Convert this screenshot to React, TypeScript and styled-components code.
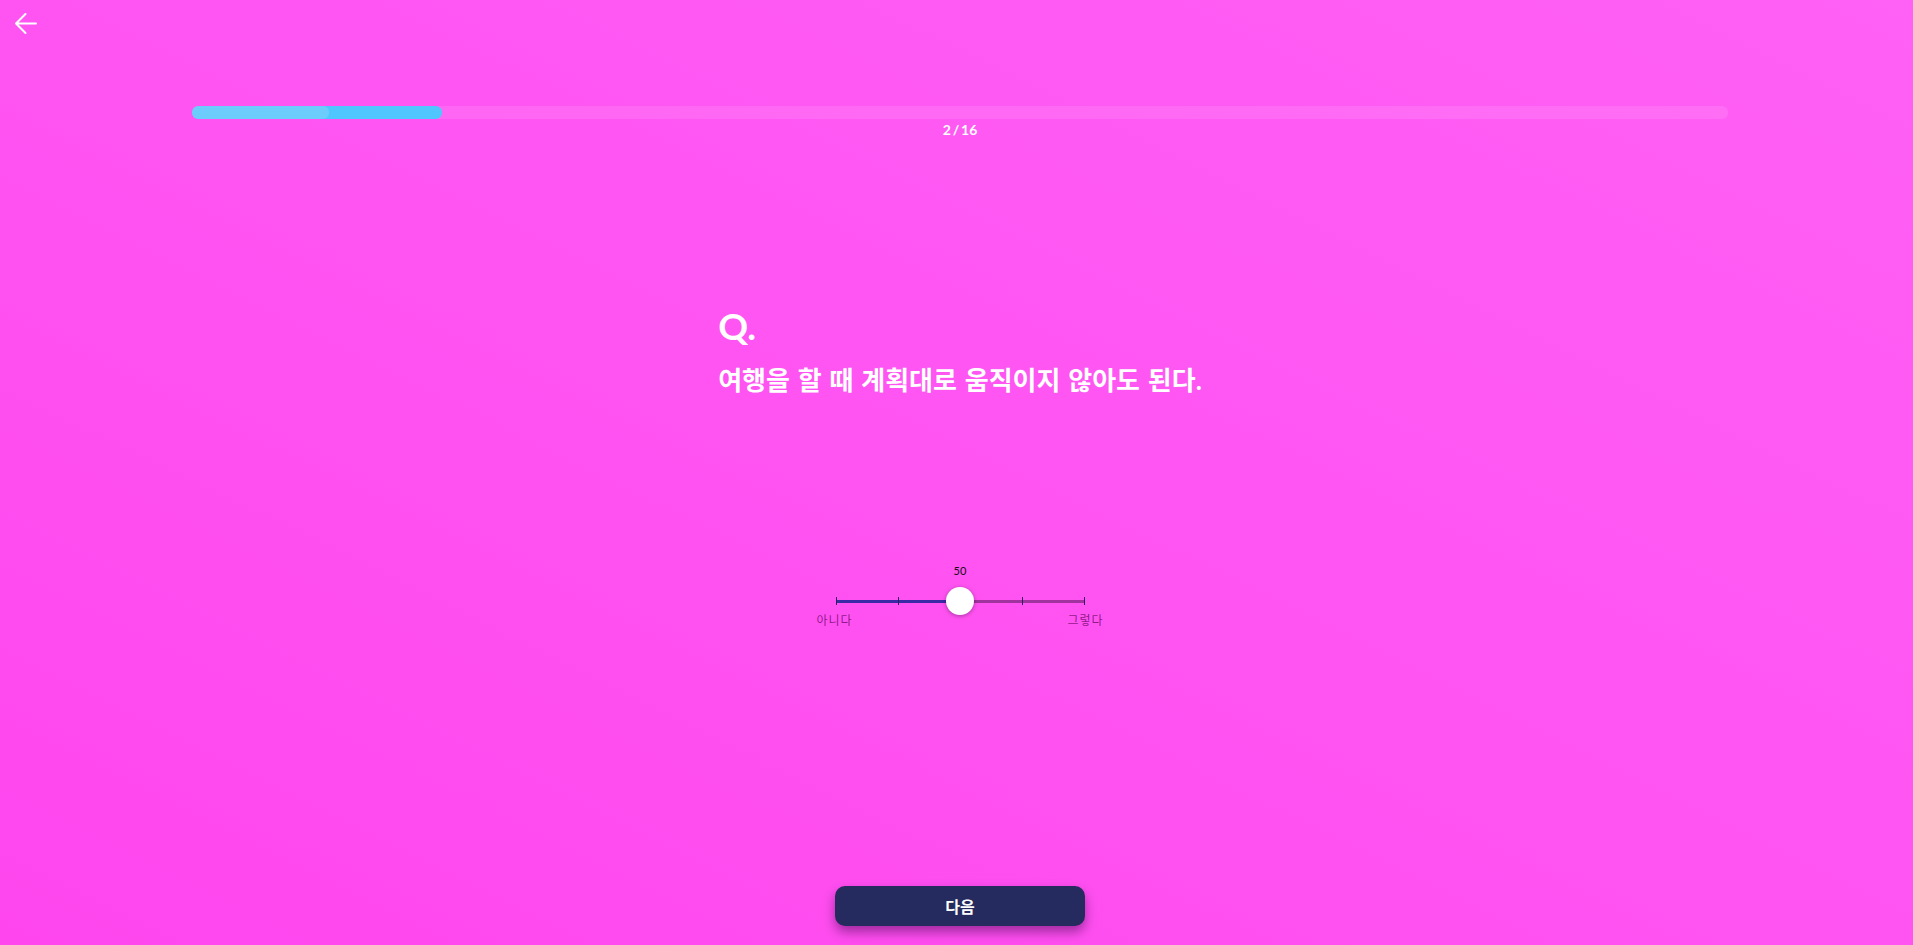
import React from "react";
import styled, { createGlobalStyle } from "styled-components";

const GlobalStyle = createGlobalStyle`
  html, body { margin: 0; padding: 0; }
  body {
    font-family: "Lato", "Noto Sans CJK KR", sans-serif;
    overflow: hidden;
  }
  * { box-sizing: border-box; }
`;

const Page = styled.div`
  width: 100%;
  height: 945px;
  background: linear-gradient(to top right, #ff46ee 0%, #ff54f2 50%, #ff60f5 100%);
  display: flex;
  flex-direction: column;
`;

const Header = styled.header`
  height: 106px;
  padding: 11px 0 0 13px;
`;

const BackButton = styled.button`
  width: 26px;
  height: 26px;
  padding: 0;
  border: none;
  background: transparent;
  cursor: pointer;
  display: flex;
`;

const Main = styled.main`
  flex: 1;
  display: flex;
  flex-direction: column;
  align-items: center;
  padding-left: 7px;
`;

const ProgressWrap = styled.div`
  width: 1536px;
  display: flex;
  flex-direction: column;
  align-items: center;
`;

const Track = styled.div`
  position: relative;
  width: 100%;
  height: 13px;
  border-radius: 6px;
  background: rgba(255, 255, 255, 0.1);
  overflow: hidden;
`;

const Bar = styled.div<{ $color: string }>`
  position: absolute;
  left: 0;
  top: 0;
  bottom: 0;
  border-radius: 6px;
  background: ${(p) => p.$color};
`;

const Counter = styled.div`
  margin-top: 2px;
  font-size: 14px;
  line-height: 17px;
  font-weight: 700;
  color: #fff;
  word-spacing: -1.5px;
`;

const Question = styled.section`
  margin-top: 166px;
  display: flex;
  flex-direction: column;
  color: #fff;
`;

const QMark = styled.div`
  font-size: 37px;
  line-height: 44px;
  font-weight: 700;
`;

const QText = styled.h1`
  margin: 14px 0 0;
  font-size: 26px;
  line-height: 36px;
  font-weight: 700;
  word-spacing: 1.5px;
`;

const SliderBlock = styled.div`
  margin-top: 166px;
  width: 248px;
  display: flex;
  flex-direction: column;
  align-items: center;
`;

const Value = styled.div`
  font-size: 11px;
  line-height: 14px;
  color: #111;
`;

const Rail = styled.div`
  position: relative;
  width: 100%;
  height: 28px;
  margin-top: 9px;
`;

const RailLine = styled.div<{ $color: string }>`
  position: absolute;
  top: 12.5px;
  height: 3px;
  background: ${(p) => p.$color};
`;

const Tick = styled.div`
  position: absolute;
  top: 10px;
  width: 1px;
  height: 8px;
  margin-left: -0.5px;
  background: #2a1f5e;
`;

const Thumb = styled.div`
  position: absolute;
  top: 0;
  width: 28px;
  height: 28px;
  margin-left: -14px;
  border-radius: 50%;
  background: #fff;
  box-shadow: 0 1px 4px rgba(0, 0, 0, 0.35);
`;

const Labels = styled.div`
  width: calc(100% + 39px);
  display: flex;
  justify-content: space-between;
  margin-top: -2px;
  font-size: 12px;
  line-height: 16px;
  color: rgba(90, 0, 90, 0.7);
  letter-spacing: 1px;
`;

const NextButton = styled.button`
  margin-top: auto;
  margin-bottom: 19px;
  width: 250px;
  height: 40px;
  border: none;
  border-radius: 10px;
  background: #252b5e;
  color: #fff;
  font-family: "Lato", "Noto Sans CJK KR", sans-serif;
  font-size: 16px;
  font-weight: 700;
  box-shadow: 0 6px 12px rgba(40, 0, 60, 0.45);
  cursor: pointer;
`;

const ticks = [0, 25, 50, 75, 100];
const value = 50;

export default function App() {
  return (
    <>
      <GlobalStyle />
      <Page>
        <Header>
          <BackButton aria-label="back">
            <svg width="26" height="26" viewBox="0 0 26 26" fill="none">
              <path d="M23 12.5H3M12.5 3L3 12.5L12.5 22" stroke="#fff" strokeWidth="2" strokeLinecap="round" strokeLinejoin="round" />
            </svg>
          </BackButton>
        </Header>
        <Main>
          <ProgressWrap>
            <Track>
              <Bar $color="#4fc7fe" style={{ width: "16.3%" }} />
              <Bar $color="#6ccdfd" style={{ width: "8.9%" }} />
            </Track>
            <Counter>2 / 16</Counter>
          </ProgressWrap>
          <Question>
            <QMark>Q.</QMark>
            <QText>여행을 할 때 계획대로 움직이지 않아도 된다.</QText>
          </Question>
          <SliderBlock>
            <Value>{value}</Value>
            <Rail>
              <RailLine $color="#3a2aa6" style={{ left: 0, width: `${value}%` }} />
              <RailLine $color="#a0339e" style={{ left: `${value}%`, right: 0 }} />
              {ticks.map((t) => (
                <Tick key={t} style={{ left: `${t}%` }} />
              ))}
              <Thumb style={{ left: `${value}%` }} />
            </Rail>
            <Labels>
              <span>아니다</span>
              <span>그렇다</span>
            </Labels>
          </SliderBlock>
          <NextButton>다음</NextButton>
        </Main>
      </Page>
    </>
  );
}
